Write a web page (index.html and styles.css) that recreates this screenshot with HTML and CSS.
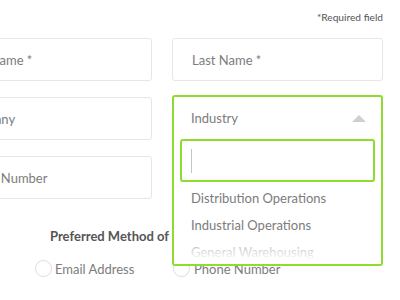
FILE: index.html
```html
<!DOCTYPE html>
<html lang="en">
<head>
  <meta charset="UTF-8">
  <meta name="viewport" content="width=device-width, initial-scale=1.0">
  <title>Contact Form</title>
  <link rel="stylesheet" href="styles.css">
</head>
<body>
  <form class="form">
    <p class="required">*Required field</p>

    <div class="grid">
      <input class="field" type="text" placeholder="First Name *">
      <input class="field" type="text" placeholder="Last Name *">
      <input class="field" type="text" placeholder="Company">

      <div class="select">
        <div class="dropdown">
          <div class="dropdown-head">
            <span>Industry</span>
            <span class="arrow"></span>
          </div>
          <div class="search"><span class="caret"></span></div>
          <ul class="options">
            <li>Distribution Operations</li>
            <li>Industrial Operations</li>
            <li>General Warehousing</li>
          </ul>
          <div class="fade"></div>
        </div>
      </div>

      <input class="field" type="text" placeholder="Phone Number">
      <input class="field" type="text" placeholder="Email Address *">
    </div>

    <h4 class="method-title">Preferred Method of Contact</h4>
    <div class="radios">
      <label class="radio"><span class="circle"></span>Email Address</label>
      <label class="radio"><span class="circle"></span>Phone Number</label>
    </div>
  </form>
</body>
</html>
```

FILE: styles.css
```css
body {
  margin: 0;
  padding: 0;
  background: #fff;
  font-family: Lato, 'Open Sans', sans-serif;
  color: #777;
  width: 400px;
  height: 300px;
  overflow: hidden;
}
.form {
  width: 442px;
  margin-left: -59px;
}
.required {
  margin: 0;
  padding-top: 11px;
  height: 27px;
  text-align: right;
  font-size: 10.2px;
  color: #555;
}
.grid {
  display: grid;
  grid-template-columns: 211px 211px;
  column-gap: 20px;
  row-gap: 16px;
}
.field {
  box-sizing: border-box;
  height: 43px;
  width: 100%;
  padding: 0 19px;
  border: 1px solid #e6e6e6;
  border-radius: 3px;
  font-family: inherit;
  font-size: 13px;
  color: #777;
  outline: none;
}
.field::placeholder {
  color: #7c7c7c;
}
.select {
  position: relative;
  height: 43px;
}
.dropdown {
  position: absolute;
  top: -2px;
  left: 0;
  right: 0;
  height: 171px;
  box-sizing: border-box;
  border: 2px solid #8fdb2f;
  border-radius: 3px;
  background: #fff;
  overflow: hidden;
  z-index: 2;
}
.dropdown-head {
  height: 42px;
  display: flex;
  align-items: center;
  justify-content: space-between;
  padding: 0 15px 0 17px;
  font-size: 13px;
  color: #7c7c7c;
}
.arrow {
  width: 0;
  height: 0;
  border-left: 7px solid transparent;
  border-right: 7px solid transparent;
  border-bottom: 7px solid #cfcfcf;
}
.search {
  box-sizing: border-box;
  height: 43px;
  margin: 0 6px;
  border: 2px solid #8fdb2f;
  border-radius: 3px;
  display: flex;
  align-items: center;
  padding-left: 9px;
}
.caret {
  width: 1px;
  height: 24px;
  background: #c4c4c4;
}
.options {
  list-style: none;
  margin: 0;
  padding: 3px 0 0;
}
.options li {
  height: 27px;
  line-height: 27px;
  padding-left: 17px;
  font-size: 13px;
  color: #7c7c7c;
}
.fade {
  position: absolute;
  left: 0;
  right: 0;
  bottom: 0;
  height: 30px;
  background: linear-gradient(to bottom, rgba(255, 255, 255, 0.2), #fff 90%);
}
.method-title {
  margin: 29px 0 0 109px;
  font-size: 13px;
  font-weight: bold;
  color: #555;
}
.radios {
  display: flex;
  margin: 16px 0 0 94px;
}
.radio {
  display: flex;
  align-items: center;
  font-size: 13px;
  color: #7c7c7c;
  width: 138px;
}
.radio .circle {
  box-sizing: border-box;
  width: 17px;
  height: 17px;
  border: 1px solid #ddd;
  border-radius: 50%;
  margin-right: 3px;
}
.radio + .radio .circle {
  margin-right: 4px;
}
```
